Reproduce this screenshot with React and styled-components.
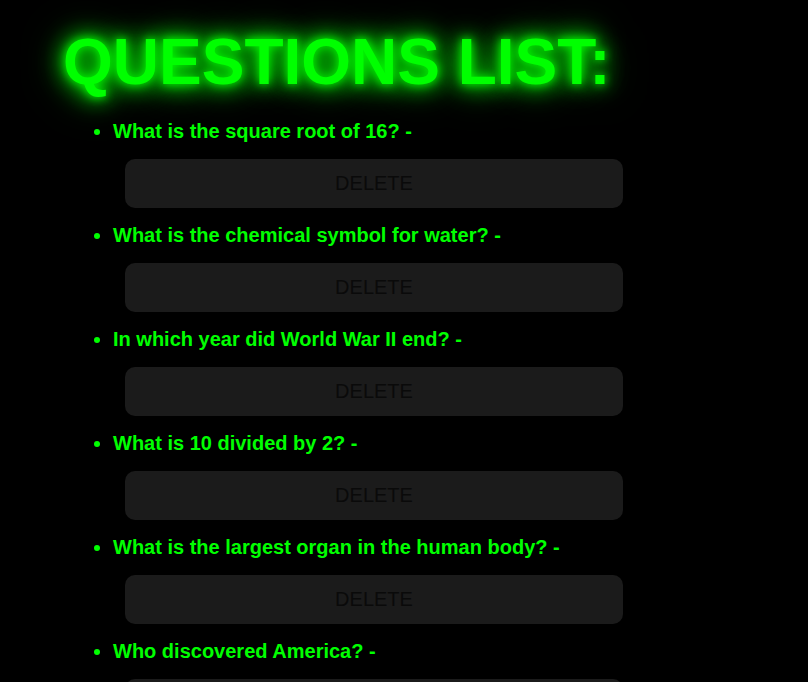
import React from "react";
import styled, { createGlobalStyle } from "styled-components";

const questions = [
  "What is the square root of 16?",
  "What is the chemical symbol for water?",
  "In which year did World War II end?",
  "What is 10 divided by 2?",
  "What is the largest organ in the human body?",
  "Who discovered America?",
];

const GlobalStyle = createGlobalStyle`
  html, body {
    margin: 0;
    background: #000;
    overflow: hidden;
  }
  body {
    font-family: "Liberation Sans", Arial, sans-serif;
  }
`;

const Page = styled.div`
  padding: 24px 0 0 63px;
`;

const Title = styled.h1`
  margin: 0;
  font-size: 64px;
  font-weight: bold;
  line-height: 76px;
  color: #00ff00;
  text-shadow: 0 0 10px #00ff00, 0 0 20px #00ff00, 0 0 30px #00aa00,
    0 0 40px #008800;
`;

const List = styled.ul`
  margin: 20px 0 0;
  padding-left: 50px;
`;

const Item = styled.li`
  color: #00ff00;
  font-size: 20px;
  font-weight: bold;
  line-height: 23px;
`;

const DeleteButton = styled.button`
  display: block;
  width: 498px;
  margin: 16px 12px;
  padding: 13px 0;
  border: none;
  border-radius: 10px;
  background: #1b1b1b;
  color: #0a0a0a;
  font-family: "Liberation Sans", Arial, sans-serif;
  font-size: 20px;
  font-weight: normal;
  line-height: 23px;
  cursor: pointer;
`;

export default function App() {
  return (
    <Page>
      <GlobalStyle />
      <Title>QUESTIONS LIST:</Title>
      <List>
        {questions.map((q) => (
          <Item key={q}>
            {q} -
            <DeleteButton>DELETE</DeleteButton>
          </Item>
        ))}
      </List>
    </Page>
  );
}
